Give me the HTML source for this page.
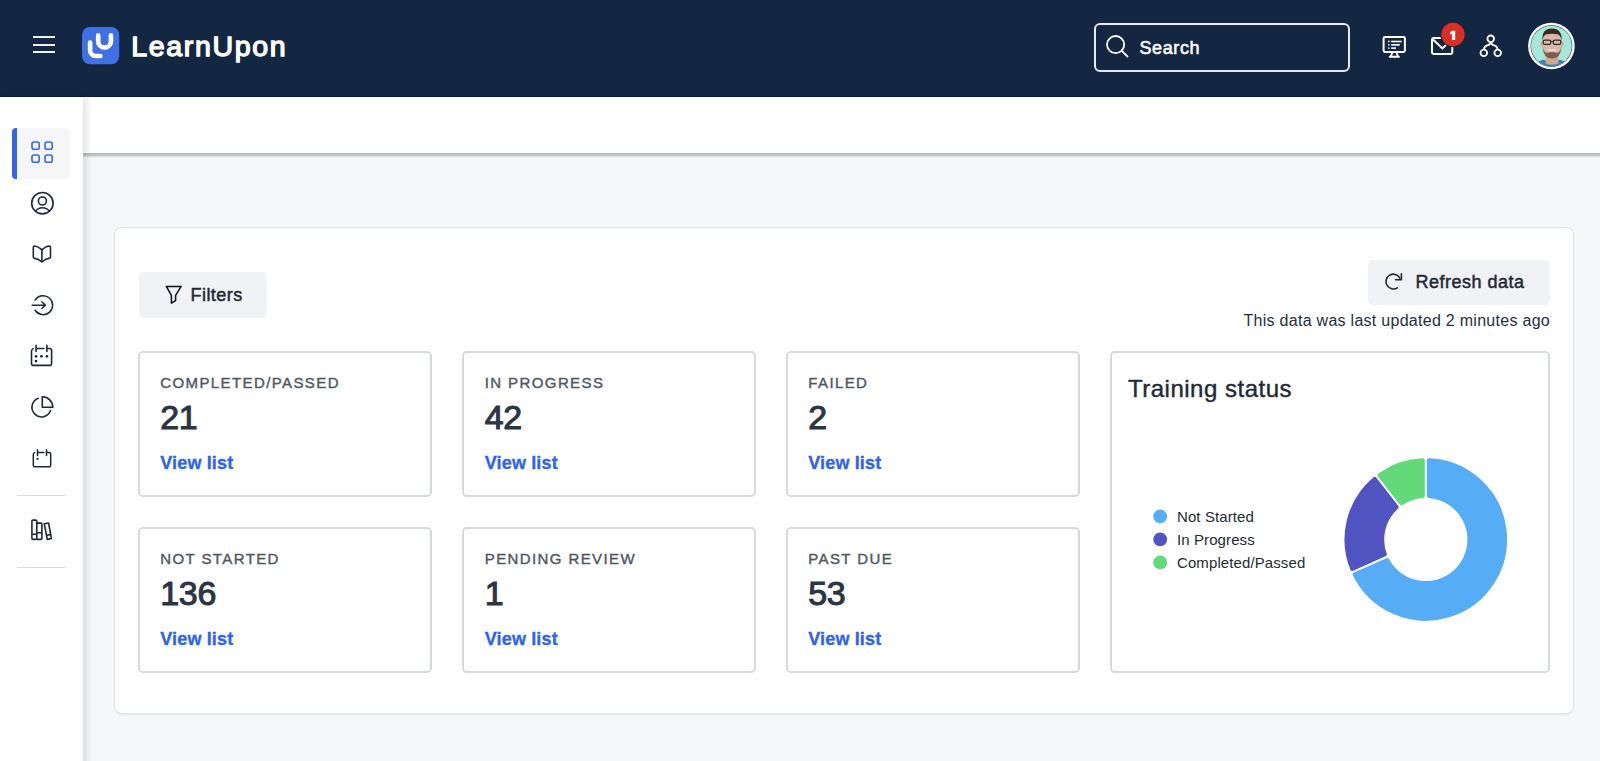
<!DOCTYPE html>
<html>
<head>
<meta charset="utf-8">
<style>
*{box-sizing:border-box;margin:0;padding:0}
html,body{width:1600px;height:761px;overflow:hidden;background:#f6f7f9;font-family:"Liberation Sans",sans-serif}
.abs{position:absolute}
#hdr{position:absolute;left:0;top:0;width:1600px;height:97px;background:#132642;border-bottom:1px solid #0b1d3a}
#side{position:absolute;left:0;top:97px;width:83px;height:700px;background:#fff;box-shadow:3px 0 8px rgba(0,0,0,0.13)}
#band{position:absolute;left:83px;top:97px;width:1517px;height:56px;background:#fff}
#panel{position:absolute;left:113.7px;top:227.2px;width:1460.8px;height:486.6px;background:#fff;border:1.5px solid #e0e3e8;border-radius:8px;box-shadow:0 1px 1.5px rgba(30,40,60,0.08)}
.card{position:absolute;background:#fff;border:2px solid #d5d8dd;border-radius:5px}
.lbl{position:absolute;left:20.75px;top:21.75px;font-size:15px;letter-spacing:1.4px;color:#4f5762;white-space:nowrap;-webkit-text-stroke:0.4px #4f5762}
.num{position:absolute;left:20.75px;top:45.75px;font-size:34px;color:#2b3544;white-space:nowrap;letter-spacing:-0.3px;-webkit-text-stroke:1.05px #2b3544}
.vl{position:absolute;left:20.75px;top:100.75px;font-size:18px;font-weight:bold;color:#3065e6;white-space:nowrap;letter-spacing:0.15px;-webkit-text-stroke:0.35px #3065e6}
.btn{position:absolute;background:#f1f2f5;border-radius:5px}
</style>
</head>
<body>
<div id="hdr">
  <!-- hamburger -->
  <div class="abs" style="left:33px;top:36px;width:22px;height:2px;background:#eeeeee"></div>
  <div class="abs" style="left:33px;top:43.6px;width:22px;height:2px;background:#eeeeee"></div>
  <div class="abs" style="left:33px;top:51.2px;width:22px;height:2px;background:#eeeeee"></div>
  <!-- logo -->
  <svg class="abs" style="left:81.8px;top:27.2px" width="38" height="38" viewBox="0 0 38 38">
    <rect x="0" y="0" width="37.2" height="37.3" rx="8" fill="#4070e6"/>
    <path d="M8.1 15.6 V23.3 A5.7 5.7 0 0 0 13.8 29 H18.4" fill="none" stroke="#fff" stroke-width="4.6" stroke-linecap="round"/>
    <path d="M16.2 8.3 V14.2 A6.35 6.35 0 0 0 28.9 14.2 V8.3" fill="none" stroke="#fff" stroke-width="4.6" stroke-linecap="round"/>
  </svg>
  <div class="abs" style="left:131.3px;top:29.7px;font-size:28.5px;color:#fff;letter-spacing:1.65px;-webkit-text-stroke:1.35px #fff">LearnUpon</div>
  <!-- search -->
  <div class="abs" style="left:1094px;top:23px;width:256px;height:48.5px;border:2px solid #e8e9ec;border-radius:6px"></div>
  <svg class="abs" style="left:1100px;top:29.2px" width="34" height="34" viewBox="0 0 34 34">
    <circle cx="15.6" cy="15.6" r="8.6" fill="none" stroke="#fff" stroke-width="1.8"/>
    <path d="M21.8 21.8 L27.5 27.5" stroke="#fff" stroke-width="1.8" stroke-linecap="round"/>
  </svg>
  <div class="abs" style="left:1139.5px;top:37.8px;font-size:18px;color:#fff;-webkit-text-stroke:0.55px #fff;letter-spacing:0.6px">Search</div>
  <!-- monitor icon -->
  <svg class="abs" style="left:1378px;top:30px" width="32" height="32" viewBox="0 0 32 32">
    <rect x="5.6" y="6.9" width="21.3" height="15" rx="1.4" fill="none" stroke="#fff" stroke-width="2"/>
    <path d="M14.2 22.5 L13 26.3 M18.6 22.5 L19.8 26.3" stroke="#fff" stroke-width="1.9"/>
    <rect x="10.8" y="25.8" width="11" height="1.9" rx="0.6" fill="#fff"/>
    <rect x="10.1" y="10.7" width="1.5" height="1.5" fill="#fff"/>
    <rect x="10.1" y="14.1" width="1.5" height="1.5" fill="#fff"/>
    <rect x="10.1" y="17.4" width="1.5" height="1.4" fill="#fff"/>
    <rect x="13.2" y="10.7" width="10.5" height="1.6" fill="#fff"/>
    <rect x="13.2" y="14.1" width="8.6" height="1.6" fill="#fff"/>
    <rect x="13.2" y="17.3" width="4.8" height="1.6" fill="#fff"/>
  </svg>
  <!-- envelope -->
  <svg class="abs" style="left:1426px;top:30px" width="32" height="32" viewBox="0 0 32 32">
    <rect x="6" y="8" width="20.3" height="16" rx="2" fill="none" stroke="#fff" stroke-width="2"/>
    <path d="M7 9.5 L16.4 18.4 L25.5 9.5" fill="none" stroke="#fff" stroke-width="2"/>
  </svg>
  <svg class="abs" style="left:1439px;top:21px" width="28" height="28" viewBox="0 0 28 28">
    <circle cx="14" cy="13.5" r="12.7" fill="#132642"/>
    <circle cx="14" cy="13.5" r="11.7" fill="#d93025"/>
    <path d="M12.9 18.9 V12.6 L11.2 13.7 V11.1 L13.6 9.7 H16.2 V18.9 Z" fill="#fff"/>
  </svg>
  
  <!-- network -->
  <svg class="abs" style="left:1475px;top:30px" width="32" height="32" viewBox="0 0 32 32">
    <g fill="none" stroke="#fff" stroke-width="1.8">
      <circle cx="15.75" cy="8.8" r="3.3"/>
      <circle cx="8.8" cy="22.9" r="3.3"/>
      <circle cx="22.7" cy="22.9" r="3.3"/>
      <path d="M15.75 12.1 Q15.5 14.6 12.2 15.4 Q9.2 16.2 8.8 19.6 M15.75 12.1 Q16 14.6 19.3 15.4 Q22.3 16.2 22.7 19.6"/>
    </g>
  </svg>
  <!-- avatar -->
  <svg class="abs" style="left:1527px;top:22px" width="49" height="49" viewBox="0 0 49 49">
    <defs><clipPath id="av"><circle cx="24.4" cy="24" r="20.4"/></clipPath></defs>
    <circle cx="24.4" cy="24" r="23.3" fill="#fff"/>
    <circle cx="24.4" cy="24" r="20.9" fill="#2a3a4a"/>
    <g clip-path="url(#av)">
      <rect x="0" y="0" width="49" height="49" fill="#a5e7d9"/>
      <path d="M5 49 Q8 40 16 37.8 L24 40 L33 37.8 Q41 40 44 49 Z" fill="#3d80b4"/>
      <path d="M18.8 33 L18.6 41.5 Q25 44 31.5 41.5 L31.3 33 Z" fill="#cfa895"/>
      <ellipse cx="15.2" cy="22" rx="1.7" ry="2.8" fill="#d2a792"/>
      <ellipse cx="34.9" cy="22" rx="1.7" ry="2.8" fill="#d2a792"/>
      <ellipse cx="25" cy="22.3" rx="9.6" ry="14.1" fill="#dbb8a6"/>
      <path d="M15.4 19 Q14.6 6.5 25 6.6 Q35.4 6.7 34.6 19 Q33.8 13.2 30.5 12.3 Q25 11.2 19.5 12.3 Q16.2 13.2 15.4 19 Z" fill="#3a2a24"/>
      <path d="M15.6 23.5 Q15.9 36.5 25 36.6 Q34.1 36.5 34.4 23.5 Q33.4 30.5 30.2 31 Q25 29.2 19.8 31 Q16.6 30.5 15.6 23.5 Z" fill="#7d5d50"/>
      <path d="M20.8 27.6 Q25 30.2 29.2 27.6 Q25 28.8 20.8 27.6 Z" fill="#efe6df" stroke="#efe6df" stroke-width="0.9"/>
      <rect x="16.2" y="18.1" width="7.6" height="4.3" rx="1.5" fill="none" stroke="#2c2a2a" stroke-width="1.2"/>
      <rect x="26.2" y="18.1" width="7.6" height="4.3" rx="1.5" fill="none" stroke="#2c2a2a" stroke-width="1.2"/>
      <path d="M23.8 19.6 H26.2" stroke="#2c2a2a" stroke-width="1"/>
    </g>
  </svg>
</div>

<div id="band"></div>
<div class="abs" style="left:83px;top:153px;width:1517px;height:4.5px;background:linear-gradient(rgba(0,0,0,0.27),rgba(0,0,0,0.21) 45%,rgba(0,0,0,0.05) 85%,rgba(0,0,0,0))"></div>
<div id="side">
  <div class="abs" style="left:11.5px;top:31px;width:58.6px;height:51px;background:#f5f6f8;border-radius:4px"></div>
  <div class="abs" style="left:11.5px;top:31px;width:5px;height:51px;background:#3563e9;border-radius:4px 0 0 4px"></div>
  <!-- grid -->
  <svg class="abs" style="left:30px;top:44px" width="25" height="25" viewBox="0 0 25 25">
    <g fill="none" stroke="#3a67e5" stroke-width="1.6">
      <rect x="2" y="1" width="7.2" height="7.2" rx="2"/>
      <rect x="15" y="1" width="7.2" height="7.2" rx="2"/>
      <rect x="2" y="14" width="7.2" height="7.2" rx="2"/>
      <rect x="15" y="14" width="7.2" height="7.2" rx="2"/>
    </g>
  </svg>
  <!-- user circle -->
  <svg class="abs" style="left:29px;top:93px" width="26" height="26" viewBox="0 0 26 26">
    <g fill="none" stroke="#1f2937" stroke-width="1.6">
      <circle cx="13.4" cy="13.2" r="10.7"/>
      <circle cx="13.4" cy="11" r="4"/>
      <path d="M6.3 21.3 Q9 17.8 13.4 17.8 Q17.8 17.8 20.5 21.3"/>
    </g>
  </svg>
  <!-- book -->
  <svg class="abs" style="left:30px;top:145px" width="24" height="24" viewBox="0 0 24 24">
    <g fill="none" stroke="#1f2937" stroke-width="1.6" stroke-linejoin="round">
      <path d="M11.9 7.9 Q8.3 4.2 4.7 4 Q3.3 4 3.3 5.4 V14.9 Q3.3 15.9 4.3 16.1 Q8.5 16.8 11.9 20 Q15.3 16.8 19.5 16.1 Q20.5 15.9 20.5 14.9 V5.4 Q20.5 4 19.1 4 Q15.5 4.2 11.9 7.9 Z"/>
      <path d="M11.9 7.9 V20"/>
    </g>
  </svg>
  <!-- arrow in circle -->
  <svg class="abs" style="left:30px;top:195px" width="26" height="26" viewBox="0 0 26 26">
    <g fill="none" stroke="#1f2937" stroke-width="1.5" stroke-linecap="round" stroke-linejoin="round">
      <path d="M5.13 8.06 A9.5 9.5 0 1 1 5.13 18.24"/>
      <path d="M2.2 13.15 H15.2 M11.9 9.8 L15.3 13.15 L11.9 16.5"/>
    </g>
  </svg>
  <!-- calendar -->
  <svg class="abs" style="left:30px;top:247px" width="24" height="24" viewBox="0 0 24 24">
    <g fill="none" stroke="#1f2937" stroke-width="1.6" stroke-linecap="round" stroke-linejoin="round">
      <path d="M3.1 4.6 Q1.5 5.4 1.5 7.5 V19.4 Q1.5 21.4 3.5 21.4 H19.6 Q21.6 21.4 21.6 19.4 V6.5 Q21.6 4.5 19.6 4.5 H16.9"/>
      <path d="M6.06 1.3 V7.5 M16.9 1.3 V7.5 M6.06 4.5 H13.9"/>
    </g>
    <g fill="#1f2937"><circle cx="6.06" cy="12.3" r="1.35"/><circle cx="11.4" cy="12.3" r="1.35"/><circle cx="16.9" cy="12.3" r="1.35"/><circle cx="6.06" cy="17.06" r="1.35"/></g>
  </svg>
  <!-- pie -->
  <svg class="abs" style="left:30px;top:298px" width="24" height="24" viewBox="0 0 24 24">
    <g fill="none" stroke="#1f2937" stroke-width="1.6" stroke-linejoin="round" stroke-linecap="round">
      <path d="M8.24 3.31 A9.6 9.6 0 1 0 20.6 15.6"/>
      <path d="M12.3 1.8 V12.3 H22.8 A10.5 10.5 0 0 0 12.3 1.8 Z"/>
    </g>
  </svg>
  <!-- calendar small -->
  <svg class="abs" style="left:30px;top:350px" width="24" height="24" viewBox="0 0 24 24">
    <g fill="none" stroke="#1f2937" stroke-width="1.5" stroke-linecap="round" stroke-linejoin="round">
      <path d="M4.6 5.6 Q3.3 6 3.3 7.6 V18.2 Q3.3 19.7 4.8 19.7 H19.2 Q20.7 19.7 20.7 18.2 V7 Q20.7 5.5 19.2 5.5 H16.5"/>
      <path d="M7.5 2.8 V8.6 M16.5 2.8 V8.6 M7.5 5.5 H13.8"/>
    </g>
    <circle cx="7.5" cy="11.8" r="1.15" fill="#1f2937"/>
  </svg>
  <div class="abs" style="left:16.5px;top:398px;width:48.5px;height:1.2px;background:#d8dce2"></div>
  <!-- books -->
  <svg class="abs" style="left:29px;top:420px" width="26" height="26" viewBox="0 0 26 26">
    <g fill="none" stroke="#1f2937" stroke-width="1.6" stroke-linejoin="round">
      <rect x="2.9" y="3.1" width="4.9" height="19.3" rx="1.1"/>
      <path d="M7.8 6.1 H11.9 Q12.9 6.1 12.9 7.1 V21.4 Q12.9 22.4 11.9 22.4 H7.8"/>
      <path d="M2.9 17.3 H7.8 M7.8 15.7 H12.9"/>
      <path d="M15.3 6.8 L19.6 6.0 L22.4 21.5 L18.2 22.4 Z"/>
      <path d="M17.5 18.4 L21.7 17.5"/>
    </g>
  </svg>
  <div class="abs" style="left:16.5px;top:469.5px;width:48.5px;height:1.2px;background:#d8dce2"></div>
</div>

<div id="panel"></div>
<div class="btn" style="left:138.5px;top:272px;width:128.5px;height:46px"></div>
<svg class="abs" style="left:162px;top:283px" width="24" height="24" viewBox="0 0 24 24">
  <path d="M4.3 3.4 H19.2 L13.6 12.3 V17.6 L9.4 20.2 V12.3 Z" fill="none" stroke="#0d1117" stroke-width="1.5" stroke-linejoin="round"/>
</svg>
<div class="abs" style="left:190.5px;top:285px;font-size:18px;color:#1f2937;-webkit-text-stroke:0.5px #1f2937;letter-spacing:0.45px">Filters</div>
<div class="btn" style="left:1368px;top:260px;width:182px;height:44.5px"></div>
<svg class="abs" style="left:1381px;top:270px" width="24" height="24" viewBox="0 0 24 24">
  <g fill="none" stroke="#1f2937" stroke-width="1.6" stroke-linecap="round" stroke-linejoin="round">
    <path d="M18.9 8.1 A7.4 7.4 0 1 0 16.4 17.8"/>
    <path d="M20.4 3.9 V9.7 H14.6"/>
  </g>
</svg>
<div class="abs" style="left:1415.5px;top:272px;font-size:18px;color:#1f2937;-webkit-text-stroke:0.5px #1f2937;letter-spacing:0.5px">Refresh data</div>
<div class="abs" style="left:1100px;top:312px;width:450px;text-align:right;font-size:16px;color:#262f3c;letter-spacing:0.28px">This data was last updated 2 minutes ago</div>
<div class="card" style="left:137.5px;top:350.7px;width:294.5px;height:146.5px">
  <div class="lbl">COMPLETED/PASSED</div><div class="num">21</div><div class="vl">View list</div>
</div>
<div class="card" style="left:462px;top:350.7px;width:293.8px;height:146.5px">
  <div class="lbl">IN PROGRESS</div><div class="num">42</div><div class="vl">View list</div>
</div>
<div class="card" style="left:785.5px;top:350.7px;width:294.5px;height:146.5px">
  <div class="lbl">FAILED</div><div class="num">2</div><div class="vl">View list</div>
</div>
<div class="card" style="left:137.5px;top:526.7px;width:294.5px;height:146.4px">
  <div class="lbl">NOT STARTED</div><div class="num">136</div><div class="vl">View list</div>
</div>
<div class="card" style="left:462px;top:526.7px;width:293.8px;height:146.4px">
  <div class="lbl">PENDING REVIEW</div><div class="num">1</div><div class="vl">View list</div>
</div>
<div class="card" style="left:785.5px;top:526.7px;width:294.5px;height:146.4px">
  <div class="lbl">PAST DUE</div><div class="num">53</div><div class="vl">View list</div>
</div>
<div class="card" style="left:1110px;top:350.7px;width:440.2px;height:322.4px">
  <div class="abs" style="left:16px;top:22px;font-size:24px;color:#1f2937;white-space:nowrap;letter-spacing:0.5px;-webkit-text-stroke:0.4px #1f2937">Training status</div>
</div>
<svg class="abs" style="left:1140px;top:500px" width="200" height="80" viewBox="0 0 200 80">
  <circle cx="20.2" cy="16.3" r="6.9" fill="#56acf5"/>
  <circle cx="20.2" cy="39.4" r="6.9" fill="#5153c0"/>
  <circle cx="20.2" cy="62.4" r="6.9" fill="#63d97a"/>
</svg>
<div class="abs" style="left:1177px;top:505px;font-size:15px;color:#262a30;line-height:23px;white-space:nowrap;letter-spacing:0.1px">Not Started<br>In Progress<br>Completed/Passed</div>
<svg class="abs" id="donut" style="left:1326px;top:440px" width="200" height="200" viewBox="0 0 200 200"><path d="M103.00 20.46 A79.10 79.10 0 1 1 28.88 134.53 L61.18 120.17 A43.80 43.80 0 1 0 103.00 55.82 Z" fill="#56acf5" stroke="#56acf5" stroke-width="4.4" stroke-linejoin="round"/><path d="M26.28 128.68 A79.10 79.10 0 0 1 48.63 39.18 L70.39 67.04 A43.80 43.80 0 0 0 58.58 114.32 Z" fill="#5153c0" stroke="#5153c0" stroke-width="4.4" stroke-linejoin="round"/><path d="M53.67 35.24 A79.10 79.10 0 0 1 96.60 20.46 L96.60 55.82 A43.80 43.80 0 0 0 75.43 63.10 Z" fill="#63d97a" stroke="#63d97a" stroke-width="4.4" stroke-linejoin="round"/></svg>


</body>
</html>
